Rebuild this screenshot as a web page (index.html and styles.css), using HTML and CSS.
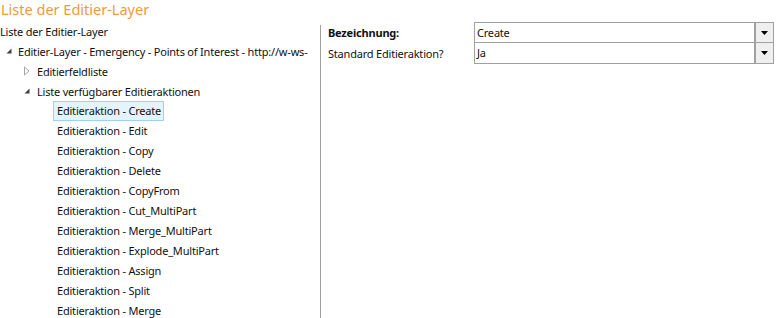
FILE: index.html
```html
<!DOCTYPE html>
<html>
<head>
<meta charset="utf-8">
<link rel="stylesheet" href="styles.css">
</head>
<body>
<div class="title">Liste der Editier-Layer</div>
<div class="main">
  <div class="tree">
    <div class="row lvl0">Liste der Editier-Layer</div>
    <div class="row lvl1"><svg class="exp" width="8" height="8" viewBox="0 0 8 8"><path d="M6.5 1.5 L6.5 6.5 L1.5 6.5 Z" fill="#404040"/></svg><span>Editier-Layer - Emergency - Points of Interest - http://w-ws-</span></div>
    <div class="row lvl2"><svg class="exp" width="8" height="10" viewBox="0 0 8 10"><path d="M1.5 1 L6 5 L1.5 9 Z" fill="none" stroke="#a6a6a6" stroke-width="1"/></svg><span>Editierfeldliste</span></div>
    <div class="row lvl2"><svg class="exp" width="8" height="8" viewBox="0 0 8 8"><path d="M6.5 1.5 L6.5 6.5 L1.5 6.5 Z" fill="#404040"/></svg><span>Liste verfügbarer Editieraktionen</span></div>
    <div class="row lvl3"><span class="sel">Editieraktion - Create</span></div>
    <div class="row lvl3"><span>Editieraktion - Edit</span></div>
    <div class="row lvl3"><span>Editieraktion - Copy</span></div>
    <div class="row lvl3"><span>Editieraktion - Delete</span></div>
    <div class="row lvl3"><span>Editieraktion - CopyFrom</span></div>
    <div class="row lvl3"><span>Editieraktion - Cut_MultiPart</span></div>
    <div class="row lvl3"><span>Editieraktion - Merge_MultiPart</span></div>
    <div class="row lvl3"><span>Editieraktion - Explode_MultiPart</span></div>
    <div class="row lvl3"><span>Editieraktion - Assign</span></div>
    <div class="row lvl3"><span>Editieraktion - Split</span></div>
    <div class="row lvl3"><span>Editieraktion - Merge</span></div>
  </div>
  <div class="divider"></div>
  <div class="props">
    <div class="labels">
      <div class="label bold">Bezeichnung:</div>
      <div class="label">Standard Editieraktion?</div>
    </div>
    <div class="combos">
      <div class="combo"><span class="val">Create</span><span class="btn"><svg width="7" height="4" viewBox="0 0 7 4"><path d="M0 0 H7 L3.5 4 Z" fill="#000"/></svg></span></div>
      <div class="combo second"><span class="val">Ja</span><span class="btn"><svg width="7" height="4" viewBox="0 0 7 4"><path d="M0 0 H7 L3.5 4 Z" fill="#000"/></svg></span></div>
    </div>
  </div>
</div>
</body>
</html>
```
FILE: styles.css
```css
html, body {
  margin: 0;
  padding: 0;
  background: #ffffff;
  width: 776px;
  height: 318px;
  overflow: hidden;
}
body {
  font-family: "Noto Sans", "Open Sans", sans-serif;
  font-size: 11px;
  color: #111111;
  letter-spacing: -0.2px;
}
.title {
  height: 21px;
  line-height: 19px;
  font-size: 14.5px;
  color: #f29a3a;
  padding-left: 1px;
  letter-spacing: 0;
}
.main {
  display: flex;
  align-items: flex-start;
}
.tree {
  width: 320px;
  display: flex;
  flex-direction: column;
  white-space: nowrap;
}
.row {
  height: 20px;
  display: flex;
  align-items: center;
}
.lvl0 { padding-left: 0; }
.lvl1 { padding-left: 5px; }
.lvl2 { padding-left: 23px; }
.lvl3 { padding-left: 53px; }
.exp { flex: none; margin-right: 5px; }
.lvl2 .exp { margin-right: 6px; }
.row span { display: inline-block; }
.lvl3 span {
  padding: 0 2px 0 3px;
  height: 18px;
  line-height: 18px;
  border: 1px solid transparent;
}
.lvl3 span.sel {
  background: #e5f3fb;
  border-color: #99d1ff;
}
.divider {
  width: 1px;
  background: #a0a0a0;
  height: 296px;
  margin-top: 4px;
  flex: none;
}
.props {
  display: flex;
  padding-left: 7px;
  padding-top: 1px;
  flex: 1;
}
.labels {
  width: 146px;
  display: flex;
  flex-direction: column;
}
.label {
  height: 20px;
  line-height: 20px;
  margin-top: 1px;
}
.bold { font-weight: bold; }
.combos {
  width: 300px;
  display: flex;
  flex-direction: column;
}
.combo {
  height: 19px;
  border: 1px solid #a0a0a0;
  display: flex;
  align-items: stretch;
}
.combo.second { border-top: none; height: 20px; }
.val {
  flex: 1;
  padding-left: 2px;
  line-height: 19px;
}
.btn {
  width: 17px;
  background: #efefef;
  border-left: 2px solid #a0a0a0;
  display: flex;
  align-items: center;
  justify-content: center;
}
```
